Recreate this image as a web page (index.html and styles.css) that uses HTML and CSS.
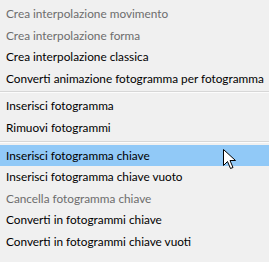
FILE: index.html
```html
<!DOCTYPE html>
<html lang="it">
<head>
    <meta charset="UTF-8">
    <title>Menu fotogrammi</title>
    <link rel="stylesheet" href="styles.css">
</head>
<body>
    <div class="menu">
        <div class="item disabled">Crea interpolazione movimento</div>
        <div class="item disabled">Crea interpolazione forma</div>
        <div class="item">Crea interpolazione classica</div>
        <div class="item">Converti animazione fotogramma per fotogramma</div>
        <div class="separator"></div>
        <div class="item">Inserisci fotogramma</div>
        <div class="item">Rimuovi fotogrammi</div>
        <div class="separator"></div>
        <div class="item active">
            Inserisci fotogramma chiave
            <svg class="cursor" width="13" height="21" viewBox="0 0 13 21">
                <path d="M0.5 0.5 L0.5 16.5 L4.5 12.5 L7.5 19.5 L10 18.5 L7 11.5 L12.5 11.5 Z" fill="#fff" stroke="#000" stroke-width="1" stroke-linejoin="miter"/>
            </svg>
        </div>
        <div class="item">Inserisci fotogramma chiave vuoto</div>
        <div class="item disabled">Cancella fotogramma chiave</div>
        <div class="item">Converti in fotogrammi chiave</div>
        <div class="item">Converti in fotogrammi chiave vuoti</div>
    </div>
</body>
</html>
```

FILE: styles.css
```css
body {
    margin: 0;
    background-color: #f0f0f0;
    font-family: Lato, 'Noto Sans', sans-serif;
    font-size: 11.8px;
    color: #000;
}

.menu {
    width: 269px;
    height: 262px;
    padding-top: 3px;
    box-sizing: border-box;
}

.item {
    position: relative;
    height: 21.6px;
    line-height: 21.6px;
    padding-left: 6px;
    white-space: nowrap;
}

.item.disabled {
    color: #6d6d6d;
}

.item.active {
    background-color: #91c9f7;
}

.separator {
    height: 1px;
    margin: 2px 0 2px;
    background-color: #d7d7d7;
    border-bottom: 1px solid #fcfcfc;
}

.cursor {
    position: absolute;
    left: 223px;
    top: 4px;
}
```
